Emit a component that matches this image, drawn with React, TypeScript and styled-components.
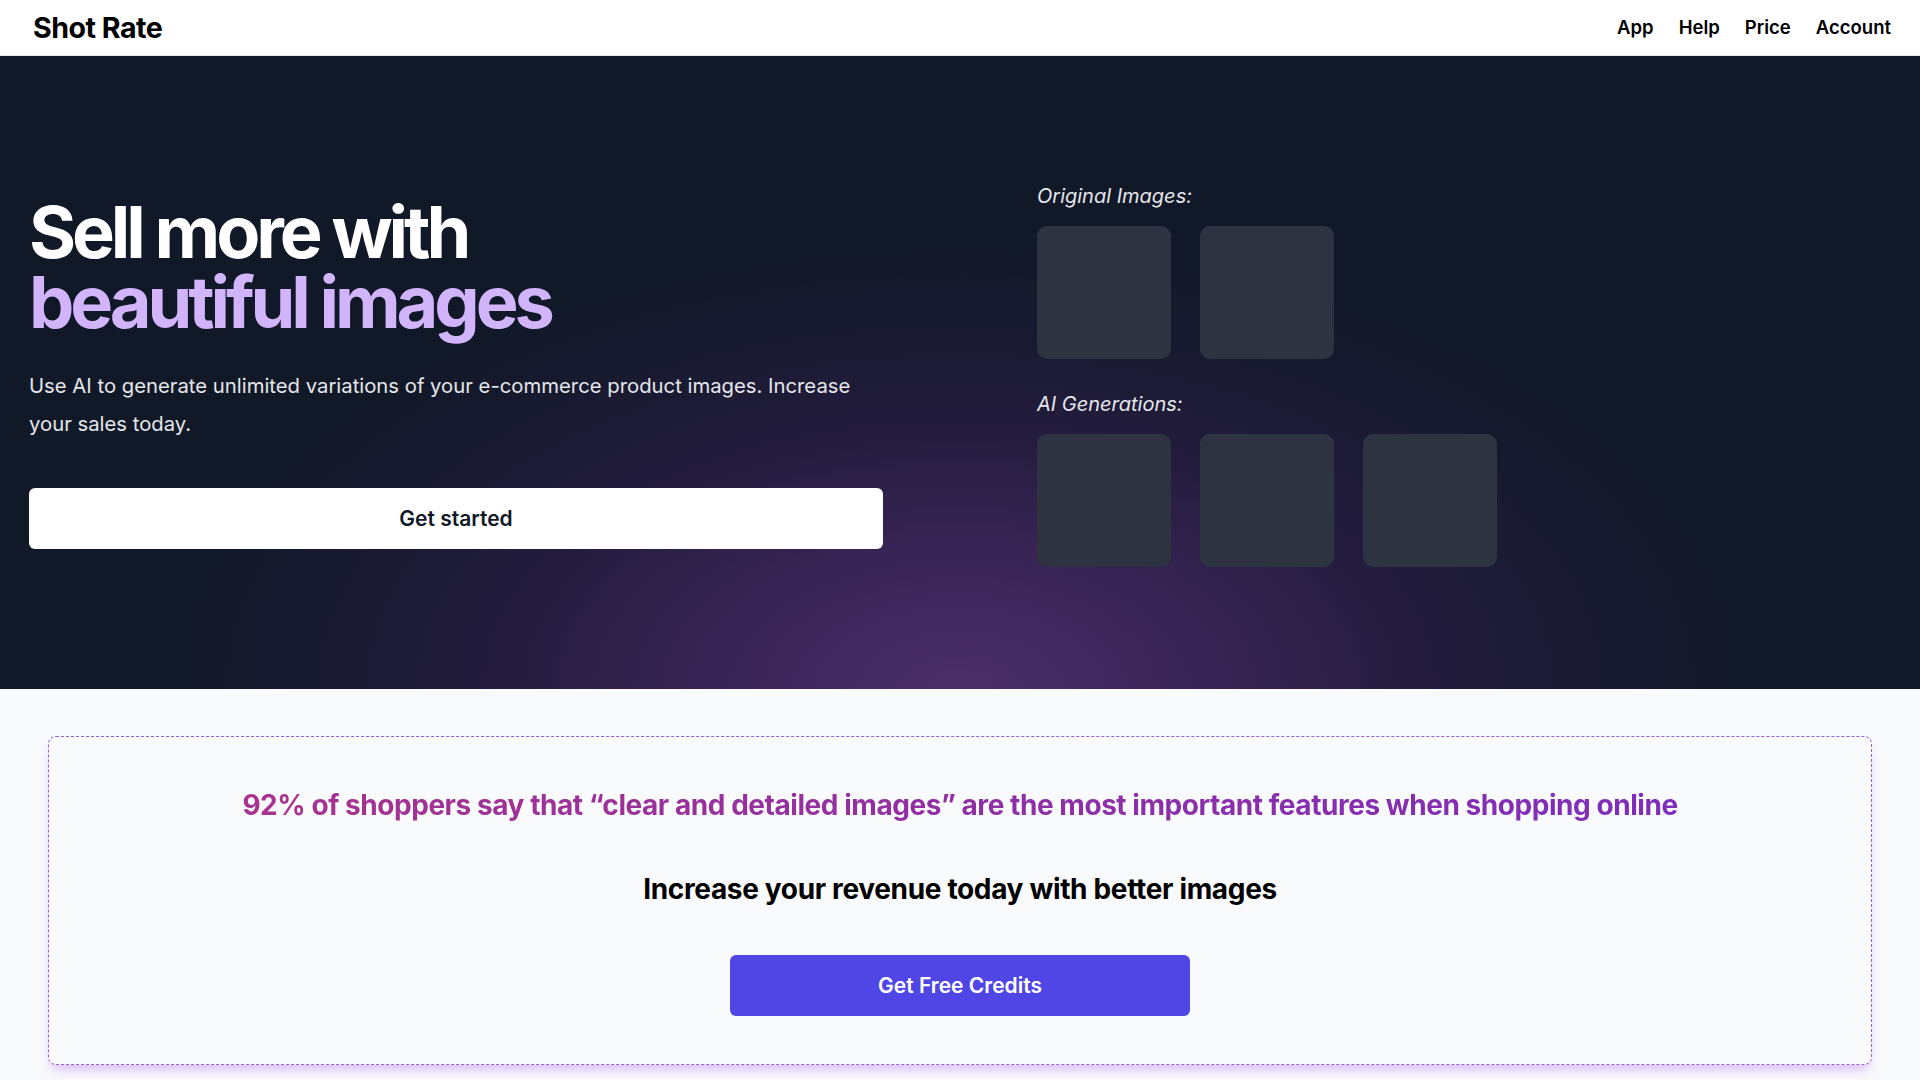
import { FC } from 'react';
import styled, { createGlobalStyle } from 'styled-components';

const GlobalStyle = createGlobalStyle`
	* {
		box-sizing: border-box;
	}

	body {
		margin: 0;
		font-family: Inter, 'Noto Sans', sans-serif;
		background: #f9fafb;
		color: #111827;
	}
`;

const Header = styled.header`
	height: 56px;
	display: flex;
	align-items: center;
	justify-content: space-between;
	padding: 0 29px 0 33px;
	background: #ffffff;
	border-bottom: 1px solid #e5e7eb;
`;

const Logo = styled.a`
	font-size: 28.6px;
	font-weight: 700;
	letter-spacing: -0.5px;
	color: #000000;
	text-decoration: none;
`;

const Nav = styled.nav`
	display: flex;
	align-items: center;
	gap: 25px;
	margin-top: -2px;
`;

const NavLink = styled.a`
	font-size: 18.5px;
	font-weight: 600;
	color: #000000;
	text-decoration: none;
`;

const Hero = styled.section`
	height: 633px;
	display: grid;
	grid-template-columns: 1fr 1fr;
	gap: 154px;
	align-items: center;
	padding: 0 29px;
	background-color: #111827;
	background-image: radial-gradient(
		ellipse 780px 440px at 50% 100%,
		rgba(74, 46, 104, 1) 0%,
		rgba(62, 38, 92, 0.9) 30%,
		rgba(44, 30, 72, 0.65) 60%,
		rgba(17, 24, 39, 0) 100%
	);
`;

const HeroText = styled.div`
	display: flex;
	flex-direction: column;
`;

const Headline = styled.h1`
	margin: 0;
	font-size: 72px;
	line-height: 70px;
	font-weight: 700;
	letter-spacing: -4.1px;
	color: #ffffff;
`;

const Accent = styled.span`
	display: block;
	color: #d2b4fb;
`;

const Lead = styled.p`
	margin: 30px 0 0;
	font-size: 20.3px;
	line-height: 38px;
	color: #e5e7eb;
`;

const Button = styled.button<{ $variant: 'light' | 'brand'; $width?: string }>`
	width: ${p => p.$width ?? '100%'};
	height: 61px;
	border: none;
	border-radius: 6px;
	font-family: Inter, sans-serif;
	font-size: 21px;
	font-weight: 600;
	cursor: pointer;
	background: ${p => (p.$variant === 'light' ? '#ffffff' : '#4f46e5')};
	color: ${p => (p.$variant === 'light' ? '#111827' : '#ffffff')};
`;

const HeroButton = styled(Button)`
	margin-top: 45px;
`;

const Gallery = styled.div`
	display: flex;
	flex-direction: column;
	padding-top: 3px;
`;

const GalleryLabel = styled.h3<{ $spaced?: boolean }>`
	margin: ${p => (p.$spaced ? '31px' : '0')} 0 16px;
	font-size: 20px;
	line-height: 28px;
	font-weight: 400;
	font-style: italic;
	color: #e5e7eb;
`;

const Thumbs = styled.div`
	display: flex;
	gap: 29px;
`;

const Thumb = styled.div`
	width: 134px;
	height: 133px;
	border-radius: 10px;
	background: #2e3342;
`;

const Promo = styled.section`
	padding: 47px 48px 16px;
`;

const Card = styled.div`
	display: flex;
	flex-direction: column;
	align-items: center;
	gap: 48px;
	padding: 50px 24px 48px;
	border: 1px dashed #9560d4;
	border-radius: 8px;
	background: #f9fafb;
	box-shadow: 0 8px 12px -4px rgba(192, 132, 252, 0.55);
`;

const Stat = styled.h2`
	margin: 0;
	font-size: 28px;
	line-height: 36px;
	font-weight: 700;
	letter-spacing: -0.45px;
	text-align: center;
	background: linear-gradient(90deg, #a6338e 0%, #8e2fa6 55%, #7e2dbb 100%);
	-webkit-background-clip: text;
	background-clip: text;
	color: transparent;
`;

const Pitch = styled.h2`
	margin: 0;
	font-size: 28px;
	line-height: 36px;
	font-weight: 700;
	letter-spacing: -0.34px;
	color: #000000;
	text-align: center;
`;

const App: FC = () => (
	<>
		<GlobalStyle />
		<Header>
			<Logo href="#">Shot Rate</Logo>
			<Nav>
				<NavLink href="#">App</NavLink>
				<NavLink href="#">Help</NavLink>
				<NavLink href="#">Price</NavLink>
				<NavLink href="#">Account</NavLink>
			</Nav>
		</Header>
		<Hero>
			<HeroText>
				<Headline>
					Sell more with
					<Accent>beautiful images</Accent>
				</Headline>
				<Lead>
					Use AI to generate unlimited variations of your e-commerce product images.
					Increase your sales today.
				</Lead>
				<HeroButton $variant="light">Get started</HeroButton>
			</HeroText>
			<Gallery>
				<GalleryLabel>Original Images:</GalleryLabel>
				<Thumbs>
					<Thumb />
					<Thumb />
				</Thumbs>
				<GalleryLabel $spaced>AI Generations:</GalleryLabel>
				<Thumbs>
					<Thumb />
					<Thumb />
					<Thumb />
				</Thumbs>
			</Gallery>
		</Hero>
		<Promo>
			<Card>
				<Stat>
					92% of shoppers say that “clear and detailed images” are the most important
					features when shopping online
				</Stat>
				<Pitch>Increase your revenue today with better images</Pitch>
				<Button $variant="brand" $width="460px">
					Get Free Credits
				</Button>
			</Card>
		</Promo>
	</>
);

export default App;
